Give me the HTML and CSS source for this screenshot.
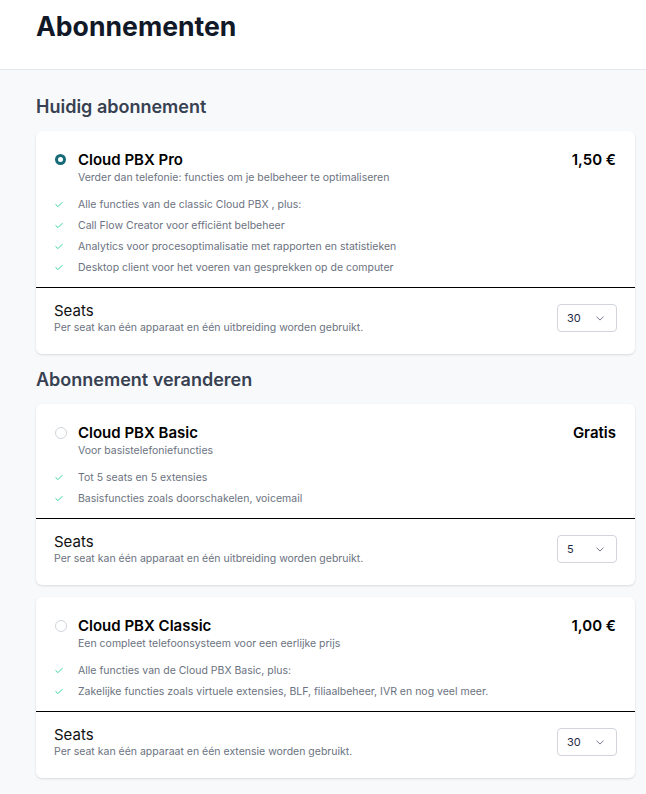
FILE: index.html
```html
<!DOCTYPE html>
<html lang="nl">
<head>
<meta charset="utf-8">
<title>Abonnementen</title>
<link rel="stylesheet" href="styles.css">
</head>
<body>
<header class="page-header">
  <h1 class="page-title">Abonnementen</h1>
</header>
<main class="content">
  <section class="section">
    <h2 class="section-title">Huidig abonnement</h2>
    <div class="card">
      <div class="plan">
        <span class="radio radio-checked"></span>
        <div class="plan-body">
          <div class="plan-head">
            <div>
              <div class="plan-name">Cloud PBX Pro</div>
              <div class="plan-sub">Verder dan telefonie: functies om je belbeheer te optimaliseren</div>
            </div>
            <div class="plan-price">1,50 €</div>
          </div>
        </div>
      </div>
      <ul class="features">
        <li><svg class="check" viewBox="0 0 10 8"><path d="M1 4.2 L3.8 6.6 L9 1.4"/></svg>Alle functies van de classic Cloud PBX , plus:</li>
        <li><svg class="check" viewBox="0 0 10 8"><path d="M1 4.2 L3.8 6.6 L9 1.4"/></svg>Call Flow Creator voor efficiënt belbeheer</li>
        <li><svg class="check" viewBox="0 0 10 8"><path d="M1 4.2 L3.8 6.6 L9 1.4"/></svg>Analytics voor procesoptimalisatie met rapporten en statistieken</li>
        <li><svg class="check" viewBox="0 0 10 8"><path d="M1 4.2 L3.8 6.6 L9 1.4"/></svg>Desktop client voor het voeren van gesprekken op de computer</li>
      </ul>
      <div class="seats">
        <div>
          <div class="seats-title">Seats</div>
          <div class="seats-desc">Per seat kan één apparaat en één uitbreiding worden gebruikt.</div>
        </div>
        <div class="select"><span>30</span><svg class="chevron" viewBox="0 0 10 6"><path d="M1 1 L5 5 L9 1"/></svg></div>
      </div>
    </div>
  </section>

  <section class="section">
    <h2 class="section-title">Abonnement veranderen</h2>
    <div class="card">
      <div class="plan">
        <span class="radio"></span>
        <div class="plan-body">
          <div class="plan-head">
            <div>
              <div class="plan-name">Cloud PBX Basic</div>
              <div class="plan-sub">Voor basistelefoniefuncties</div>
            </div>
            <div class="plan-price">Gratis</div>
          </div>
        </div>
      </div>
      <ul class="features">
        <li><svg class="check" viewBox="0 0 10 8"><path d="M1 4.2 L3.8 6.6 L9 1.4"/></svg>Tot 5 seats en 5 extensies</li>
        <li><svg class="check" viewBox="0 0 10 8"><path d="M1 4.2 L3.8 6.6 L9 1.4"/></svg>Basisfuncties zoals doorschakelen, voicemail</li>
      </ul>
      <div class="seats">
        <div>
          <div class="seats-title">Seats</div>
          <div class="seats-desc">Per seat kan één apparaat en één uitbreiding worden gebruikt.</div>
        </div>
        <div class="select"><span>5</span><svg class="chevron" viewBox="0 0 10 6"><path d="M1 1 L5 5 L9 1"/></svg></div>
      </div>
    </div>
    <div class="card">
      <div class="plan">
        <span class="radio"></span>
        <div class="plan-body">
          <div class="plan-head">
            <div>
              <div class="plan-name">Cloud PBX Classic</div>
              <div class="plan-sub">Een compleet telefoonsysteem voor een eerlijke prijs</div>
            </div>
            <div class="plan-price">1,00 €</div>
          </div>
        </div>
      </div>
      <ul class="features">
        <li><svg class="check" viewBox="0 0 10 8"><path d="M1 4.2 L3.8 6.6 L9 1.4"/></svg>Alle functies van de Cloud PBX Basic, plus:</li>
        <li><svg class="check" viewBox="0 0 10 8"><path d="M1 4.2 L3.8 6.6 L9 1.4"/></svg>Zakelijke functies zoals virtuele extensies, BLF, filiaalbeheer, IVR en nog veel meer.</li>
      </ul>
      <div class="seats">
        <div>
          <div class="seats-title">Seats</div>
          <div class="seats-desc">Per seat kan één apparaat en één extensie worden gebruikt.</div>
        </div>
        <div class="select"><span>30</span><svg class="chevron" viewBox="0 0 10 6"><path d="M1 1 L5 5 L9 1"/></svg></div>
      </div>
    </div>
  </section>
</main>
</body>
</html>
```

FILE: styles.css
```css
* { box-sizing: border-box; }

html, body {
  margin: 0;
  padding: 0;
}

body {
  font-family: Inter, "Noto Sans", "Liberation Sans", sans-serif;
  background: #f8f9fb;
  color: #111827;
  min-height: 794px;
}

.page-header {
  background: #ffffff;
  border-bottom: 1px solid #e5e7eb;
  padding: 8px 36px 25px;
}

.page-title {
  margin: 0;
  font-size: 26.6px;
  line-height: 36px;
  font-weight: 700;
  color: #111827;
}

.content {
  padding: 25px 11px 16px 36px;
  display: flex;
  flex-direction: column;
  gap: 14px;
}

.section {
  display: flex;
  flex-direction: column;
  gap: 12px;
}

.section-title {
  margin: 0;
  font-size: 18px;
  line-height: 24px;
  font-weight: 600;
  color: #374151;
}

.card {
  background: #ffffff;
  border-radius: 6px;
  box-shadow: 0 1px 3px rgba(0, 0, 0, 0.08), 0 1px 2px rgba(0, 0, 0, 0.05);
  overflow: hidden;
}

.plan {
  display: flex;
  gap: 11px;
  padding: 19px 19px 0 19px;
}

.radio {
  flex: none;
  width: 12px;
  height: 12px;
  margin-top: 4px;
  border-radius: 50%;
  border: 1px solid #d1d5db;
  background: #fff;
}

.radio-checked {
  width: 11px;
  height: 11px;
  margin-right: 1px;
  border: 3.5px solid #176b78;
  background: #ffffff;
}

.plan-body {
  flex: 1;
}

.plan-head {
  display: flex;
  justify-content: space-between;
  align-items: flex-start;
}

.plan-name {
  font-size: 15px;
  line-height: 20px;
  font-weight: 600;
  color: #000000;
}

.plan-price {
  font-size: 15px;
  line-height: 20px;
  font-weight: 600;
  color: #000000;
}

.plan-sub {
  font-size: 10.5px;
  line-height: 16px;
  color: #6b7280;
}

.features {
  list-style: none;
  margin: 0;
  padding: 8px 19px 9px 19px;
}

.features li {
  display: flex;
  align-items: center;
  gap: 15px;
  font-size: 10.5px;
  line-height: 21px;
  color: #6b7280;
}

.check {
  flex: none;
  width: 8px;
  height: 7px;
  fill: none;
  stroke: #34d399;
  stroke-width: 1.2;
  stroke-linecap: round;
  stroke-linejoin: round;
}

.seats {
  border-top: 1px solid #000000;
  display: flex;
  justify-content: space-between;
  align-items: center;
  padding: 13px 18px 19px 18px;
}

.seats-title {
  font-size: 15px;
  line-height: 20px;
  color: #111111;
}

.seats-desc {
  font-size: 10.5px;
  line-height: 14px;
  color: #6b7280;
}

.select {
  width: 60px;
  height: 28px;
  border: 1px solid #d1d5db;
  border-radius: 4px;
  display: flex;
  align-items: center;
  justify-content: space-between;
  padding: 0 12px 0 9px;
  font-size: 11px;
  color: #1f2a44;
}

.chevron {
  width: 8px;
  height: 5px;
  fill: none;
  stroke: #6b7280;
  stroke-width: 1.2;
  stroke-linecap: round;
  stroke-linejoin: round;
}
```
